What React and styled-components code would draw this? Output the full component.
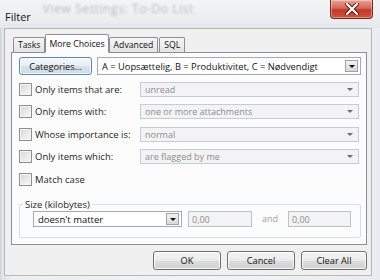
import React from "react";
import styled, { createGlobalStyle } from "styled-components";

const Global = createGlobalStyle`
  html, body { margin: 0; padding: 0; background: #e9ecef; }
  body { font-family: "Open Sans", "Noto Sans", sans-serif; font-size: 9.5px; color: #1e1e1e; }
  * { box-sizing: border-box; }
`;

const Window = styled.div`
  width: 380px;
  height: 280px;
  display: flex;
  flex-direction: column;
  overflow: hidden;
  background: linear-gradient(90deg, #c9cdd2 0px, #e4e7ea 2px, #dfe3e7 4px, #eceff2 12px, #f1f3f5 60%, #e9edf1 100%);
`;

const TitleBar = styled.div`
  height: 28px;
  display: flex;
  align-items: flex-start;
  padding-left: 5px;
  background: linear-gradient(180deg, #f3f4f6 0%, #eceef1 60%, #e6e9ec 100%);
`;

const Title = styled.div`
  margin-top: 9px;
  font-size: 11px;
  color: #111;
`;

const Ghost = styled.div`
  margin: 0 0 0 12px;
  font-size: 12px;
  letter-spacing: 0.6px;
  color: #babdc1;
  filter: blur(1.2px);
`;

const CloseButton = styled.div`
  margin-left: auto;
  margin-right: 7px;
  width: 43px;
  height: 19px;
  border: 1px solid #7a2a22;
  border-top: none;
  border-radius: 0 0 4px 4px;
  background: linear-gradient(180deg, #e7a596 0%, #d2675a 45%, #c2382b 55%, #d0533f 100%);
  display: flex;
  align-items: center;
  justify-content: center;
  box-shadow: inset 0 0 0 1px rgba(255,255,255,0.35);
`;

const Client = styled.div`
  flex: 1;
  margin: 0 8px 4px 4px;
  border: 1px solid #b4b9bf;
  background: #f0f0f0;
  display: flex;
  flex-direction: column;
  padding: 4px 4px 0 6px;
`;

const TabStrip = styled.div`
  display: flex;
  align-items: flex-end;
  padding-left: 2px;
  height: 19px;
  position: relative;
  z-index: 1;
`;

const Tab = styled.div`
  height: ${p => (p.$active ? 19 : 15)}px;
  padding: 0 ${p => (p.$active ? 3 : 4)}px;
  margin-right: ${p => (p.$active ? 0 : 1)}px;
  margin-left: ${p => (p.$active ? -1 : 0)}px;
  border: 1px solid #8c8e94;
  border-bottom: ${p => (p.$active ? "1px solid #fcfcfc" : "none")};
  border-radius: 2px 2px 0 0;
  background: ${p => (p.$active ? "#fcfcfc" : "linear-gradient(180deg, #f6f6f6, #e4e4e4)")};
  display: flex;
  align-items: center;
  font-size: 8.7px;
  color: #111;
  margin-bottom: ${p => (p.$active ? -1 : 0)}px;
`;

const Panel = styled.div`
  height: 193px;
  border: 1px solid #8c8e94;
  background: #fcfcfc;
  display: flex;
  flex-direction: column;
  padding: 4px 5px 0 7px;
`;

const TopRow = styled.div`
  display: flex;
  align-items: center;
  height: 18px;
  gap: 5px;
  margin-bottom: 3px;
`;

const PushButton = styled.div`
  width: ${p => p.$w}px;
  height: ${p => p.$h || 18}px;
  border: 1px solid ${p => (p.$default ? "#5b87b1" : "#707070")};
  border-radius: 3px;
  background: ${p =>
    p.$default
      ? "linear-gradient(180deg, #f4f8fb 0%, #e7eef4 50%, #d6e1ea 51%, #cfdbe5 100%)"
      : "linear-gradient(180deg, #f5f5f5 0%, #ebebeb 50%, #dddddd 51%, #d1d1d1 100%)"};
  box-shadow: inset 0 0 0 1px rgba(255,255,255,0.8);
  display: flex;
  align-items: center;
  justify-content: center;
  font-size: 9.2px;
  color: #111;
`;

const Combo = styled.div`
  width: ${p => p.$w}px;
  height: ${p => p.$h || 15}px;
  border: 1px solid ${p => (p.$disabled ? "#c5ccd6" : "#a6abb3")};
  background: ${p => (p.$disabled ? "#f3f3f3" : "#fff")};
  display: flex;
  align-items: center;
  padding: 1px 1px 1px 4px;
  color: ${p => (p.$disabled ? "#8d8d8d" : "#111")};
  font-size: ${p => p.$fs || 9}px;
`;

const ComboText = styled.div`
  flex: 1;
  white-space: nowrap;
  overflow: hidden;
`;

const DropButton = styled.div`
  width: 13px;
  height: 100%;
  max-height: 12px;
  margin-right: 1px;
  display: flex;
  align-items: center;
  justify-content: center;
  border: 1px solid ${p => (p.$flat ? "transparent" : "#a3a3a3")};
  background: ${p => (p.$flat ? "transparent" : "linear-gradient(180deg, #f2f2f2, #d8d8d8)")};
`;

const Arrow = styled.div`
  width: 0;
  height: 0;
  border-left: 3px solid transparent;
  border-right: 3px solid transparent;
  border-top: 3px solid ${p => (p.$disabled ? "#6d6d6d" : "#111")};
`;

const CheckRow = styled.div`
  height: 22.5px;
  display: flex;
  align-items: center;
`;

const CheckBox = styled.div`
  width: 13px;
  height: 13px;
  border: 1px solid #8e8f8f;
  background: linear-gradient(135deg, #d6d6d6 0%, #ececec 60%, #f6f6f6 100%);
  box-shadow: inset 0 0 0 1px #f4f4f4;
  margin-right: 3px;
`;

const CheckLabel = styled.div`
  width: ${p => p.$w || "auto"};
  white-space: nowrap;
`;

const GroupBox = styled.div`
  position: relative;
  margin-top: 13.5px;
  height: 34px;
  padding: 6px 0 0 13px;
  border: 1px solid #d5dfe5;
  border-radius: 2px;
  display: flex;
  align-items: flex-start;
  gap: 6px;
`;

const GroupLabel = styled.div`
  position: absolute;
  left: 3px;
  top: -7px;
  padding: 0 2px;
  background: #fcfcfc;
  font-size: 9.5px;
  line-height: 13px;
  color: #1e1e1e;
`;

const FieldInput = styled.div`
  width: ${p => p.$w}px;
  height: 16px;
  border: 1px solid #b9c3cf;
  background: #f3f3f3;
  color: #8d8d8d;
  font-size: 9px;
  padding: 0 3px;
  display: flex;
  align-items: center;
`;

const AndLabel = styled.div`
  color: #a2a2a2;
  font-size: 9px;
  line-height: 16px;
  width: 22px;
  text-align: center;
  margin: 0 1px;
`;

const ButtonRow = styled.div`
  display: flex;
  justify-content: flex-end;
  gap: 6px;
  padding-top: 6px;
`;

const CloseGlyph = () => (
  <svg width="14" height="12" viewBox="0 0 14 12">
    <path d="M2 1 L12 11 M12 1 L2 11" stroke="#5a1a14" strokeWidth="4" strokeLinecap="round" />
    <path d="M2 1 L12 11 M12 1 L2 11" stroke="#fff" strokeWidth="2.2" strokeLinecap="round" />
  </svg>
);

const rows = [
  { label: "Only items that are:", value: "unread" },
  { label: "Only items with:", value: "one or more attachments" },
  { label: "Whose importance is:", value: "normal" },
  { label: "Only items which:", value: "are flagged by me" },
];

export default function App() {
  return (
    <>
      <Global />
      <Window>
        <TitleBar>
          <Title>Filter</Title>
          <Ghost>View Settings: To-Do List</Ghost>
          <CloseButton>
            <CloseGlyph />
          </CloseButton>
        </TitleBar>
        <Client>
          <TabStrip>
            <Tab>Tasks</Tab>
            <Tab $active>More Choices</Tab>
            <Tab>Advanced</Tab>
            <Tab>SQL</Tab>
          </TabStrip>
          <Panel>
            <TopRow>
              <PushButton $w={73} $default>Categories...</PushButton>
              <Combo $w={264} $h={18} $fs={9.3}>
                <ComboText>A = Uopsættelig, B = Produktivitet, C = Nødvendigt</ComboText>
                <DropButton>
                  <Arrow />
                </DropButton>
              </Combo>
            </TopRow>
            {rows.map(r => (
              <CheckRow key={r.label}>
                <CheckBox />
                <CheckLabel $w="105px">{r.label}</CheckLabel>
                <Combo $w={219} $disabled>
                  <ComboText>{r.value}</ComboText>
                  <DropButton $flat>
                    <Arrow $disabled />
                  </DropButton>
                </Combo>
              </CheckRow>
            ))}
            <CheckRow>
              <CheckBox />
              <CheckLabel>Match case</CheckLabel>
            </CheckRow>
            <GroupBox>
              <GroupLabel>Size (kilobytes)</GroupLabel>
              <Combo $w={149} $h={16} $fs={9.5}>
                <ComboText>doesn't matter</ComboText>
                <DropButton>
                  <Arrow />
                </DropButton>
              </Combo>
              <FieldInput $w={64}>0,00</FieldInput>
              <AndLabel>and</AndLabel>
              <FieldInput $w={63}>0,00</FieldInput>
            </GroupBox>
          </Panel>
          <ButtonRow>
            <PushButton $w={68} $h={19}>OK</PushButton>
            <PushButton $w={68} $h={19}>Cancel</PushButton>
            <PushButton $w={66} $h={19}>Clear All</PushButton>
          </ButtonRow>
        </Client>
      </Window>
    </>
  );
}
